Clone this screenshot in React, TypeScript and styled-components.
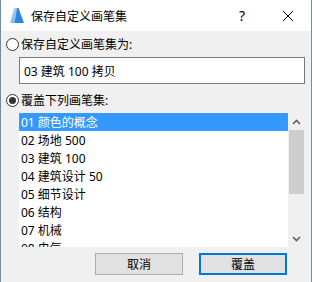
import styled, { createGlobalStyle } from "styled-components"

const GlobalStyle = createGlobalStyle`
  html, body {
    margin: 0;
    padding: 0;
    background: #f0f0f0;
  }
  * {
    box-sizing: border-box;
  }
`

const Window = styled.div`
  display: flex;
  flex-direction: column;
  width: 312px;
  height: 282px;
  border-left: 1px solid #6f8cab;
  border-right: 1px solid #6f8cab;
  background: #f0f0f0;
  font-family: "Noto Sans", "Noto Sans CJK SC", sans-serif;
  font-size: 12px;
  color: #000;
  overflow: hidden;
`

const TitleBar = styled.div`
  display: flex;
  align-items: center;
  height: 31px;
  flex-shrink: 0;
  background: #fff;
`

const AppIcon = styled.svg`
  margin-left: 9px;
  width: 14px;
  height: 15px;
`

const Title = styled.span`
  margin-left: 7px;
  flex: 1;
  font-size: 12px;
`

const CaptionButton = styled.div`
  display: flex;
  align-items: center;
  justify-content: center;
  width: 46px;
  height: 31px;
  font-size: 14px;
`

const Body = styled.div`
  display: flex;
  flex-direction: column;
  padding: 0 5px;
`

const RadioRow = styled.label<{ top: number }>`
  display: flex;
  align-items: center;
  gap: 2px;
  height: 16px;
  margin-top: ${({ top }) => top}px;
`

const RadioCircle = styled.span<{ checked?: boolean }>`
  position: relative;
  width: 13px;
  height: 13px;
  border: 1px solid #333;
  border-radius: 50%;
  background: #fff;

  &::after {
    content: "";
    display: ${({ checked }) => (checked ? "block" : "none")};
    position: absolute;
    left: 2px;
    top: 2px;
    width: 7px;
    height: 7px;
    border-radius: 50%;
    background: #333;
  }
`

const NameInput = styled.div`
  display: flex;
  align-items: center;
  margin: 5px 0 0 13px;
  padding-left: 4px;
  width: 286px;
  height: 27px;
  background: #fff;
  border: 1px solid #7a7a7a;
`

const ListBox = styled.div`
  display: flex;
  margin: 5px 0 0 13px;
  width: 286px;
  height: 134px;
`

const Items = styled.div`
  flex: 1;
  background: #fff;
  overflow: hidden;
`

const Item = styled.div<{ selected?: boolean }>`
  display: flex;
  align-items: center;
  height: 18px;
  padding-left: 2px;
  white-space: nowrap;
  color: ${({ selected }) => (selected ? "#fff" : "#000")};
  background: ${({ selected }) => (selected ? "#3399ff" : "transparent")};
  outline: ${({ selected }) => (selected ? "1px dotted #c8803a" : "none")};
  outline-offset: -1px;
`

const ScrollBar = styled.div`
  display: flex;
  flex-direction: column;
  width: 17px;
  background: #f0f0f0;
`

const ScrollArrow = styled.div`
  display: flex;
  align-items: center;
  justify-content: center;
  height: 17px;
`

const ScrollTrack = styled.div`
  flex: 1;
  padding: 0 1px;
`

const Thumb = styled.div`
  height: 64px;
  background: #cdcdcd;
`

const ButtonRow = styled.div`
  display: flex;
  justify-content: flex-end;
  gap: 16px;
  margin-top: 6px;
  padding-right: 19px;
`

const Button = styled.div<{ primary?: boolean }>`
  display: flex;
  align-items: center;
  justify-content: center;
  width: 88px;
  height: 22px;
  background: #e1e1e1;
  border: ${({ primary }) => (primary ? "2px solid #0078d7" : "1px solid #adadad")};
`

const items = [
  "01 颜色的概念",
  "02 场地 500",
  "03 建筑 100",
  "04 建筑设计 50",
  "05 细节设计",
  "06 结构",
  "07 机械",
  "08 电气",
  "09 打印",
]

function Chevron({ down }: { down?: boolean }) {
  return (
    <svg width="9" height="6" viewBox="0 0 9 6">
      <path
        d={down ? "M1 1 L4.5 4.5 L8 1" : "M1 5 L4.5 1.5 L8 5"}
        fill="none"
        stroke="#606060"
        strokeWidth="1.6"
      />
    </svg>
  )
}

export default function App() {
  return (
    <>
      <GlobalStyle />
      <Window>
        <TitleBar>
          <AppIcon viewBox="0 0 14 15">
            <defs>
              <linearGradient id="lg" x1="0" y1="0" x2="1" y2="1">
                <stop offset="0" stopColor="#cfe6fb" />
                <stop offset="1" stopColor="#5aa7ef" />
              </linearGradient>
            </defs>
            <polygon points="0,15 4,0 7,0 4.5,15" fill="url(#lg)" />
            <polygon points="4.5,15 7,0 8.5,0 14,15" fill="#2f86dc" />
          </AppIcon>
          <Title>保存自定义画笔集</Title>
          <CaptionButton>?</CaptionButton>
          <CaptionButton>
            <svg width="10" height="10" viewBox="0 0 10 10">
              <path d="M0 0 L10 10 M10 0 L0 10" stroke="#000" strokeWidth="1" />
            </svg>
          </CaptionButton>
        </TitleBar>
        <Body>
          <RadioRow top={5}>
            <RadioCircle />
            保存自定义画笔集为:
          </RadioRow>
          <NameInput>03 建筑 100 拷贝</NameInput>
          <RadioRow top={8}>
            <RadioCircle checked />
            覆盖下列画笔集:
          </RadioRow>
          <ListBox>
            <Items>
              {items.map((item, index) => (
                <Item key={index} selected={index == 0}>
                  {item}
                </Item>
              ))}
            </Items>
            <ScrollBar>
              <ScrollArrow>
                <Chevron />
              </ScrollArrow>
              <ScrollTrack>
                <Thumb />
              </ScrollTrack>
              <ScrollArrow>
                <Chevron down />
              </ScrollArrow>
            </ScrollBar>
          </ListBox>
          <ButtonRow>
            <Button>取消</Button>
            <Button primary>覆盖</Button>
          </ButtonRow>
        </Body>
      </Window>
    </>
  )
}
